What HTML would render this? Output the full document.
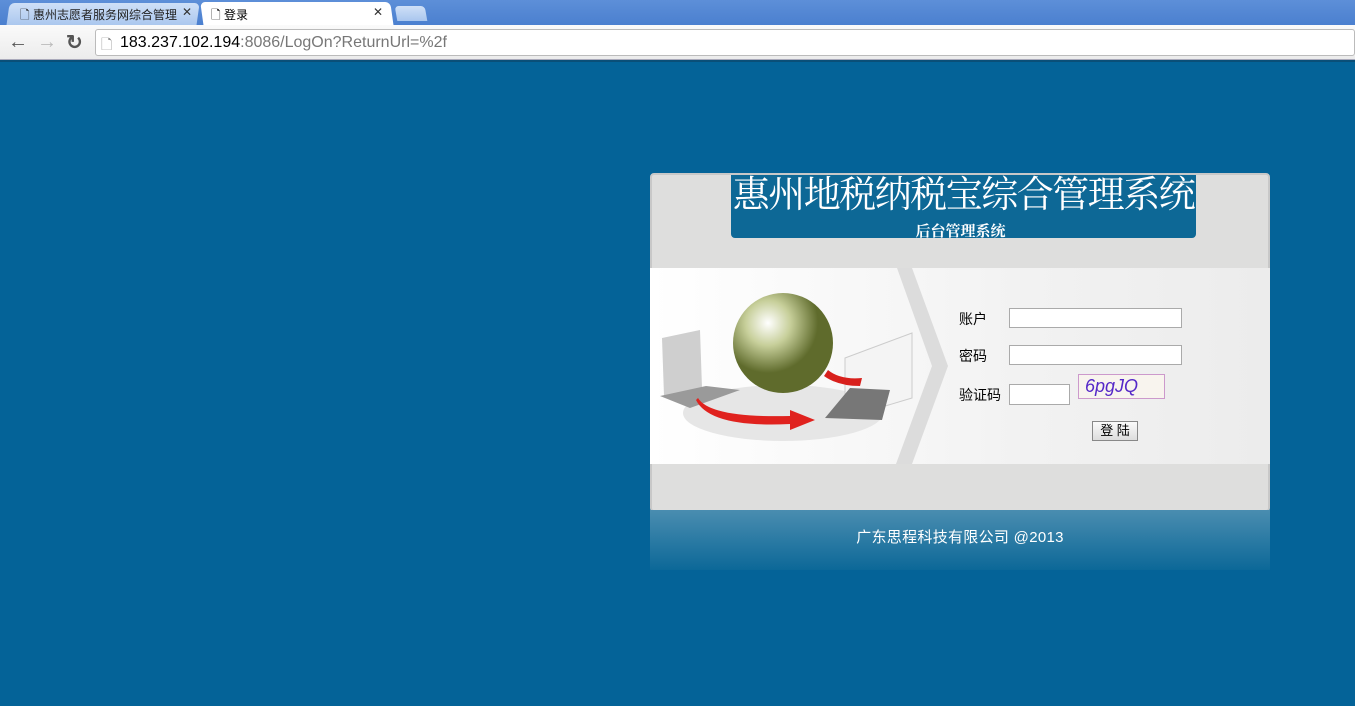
<!DOCTYPE html>
<html><head><meta charset="utf-8"><style>
*{margin:0;padding:0;box-sizing:border-box}
body{width:1355px;height:706px;overflow:hidden;background:#046398;font-family:"Liberation Sans","Noto Sans CJK SC",sans-serif;position:relative}
.abs{position:absolute}
</style></head><body>
<div class="abs" style="left:0;top:0;width:1355px;height:26px;background:linear-gradient(#5d8fd8,#4a7fcf)"></div>
<div class="abs" style="left:8px;top:3px;width:190px;height:23px;background:linear-gradient(#cfe0f7,#a9c6ee);border-radius:5px 5px 0 0;transform:skewX(-8deg)"></div>
<div class="abs" style="left:20px;top:6px;font-size:12px;color:#222;white-space:nowrap">🗋 惠州志愿者服务网综合管理</div>
<div class="abs" style="left:182px;top:5px;font-size:12px;color:#333">✕</div>
<div class="abs" style="left:202px;top:2px;width:190px;height:25px;background:#fff;border-radius:5px 5px 0 0;transform:skewX(8deg)"></div>
<div class="abs" style="left:211px;top:6px;font-size:12px;color:#000">🗋 登录</div>
<div class="abs" style="left:373px;top:5px;font-size:12px;color:#333">✕</div>
<div class="abs" style="left:396px;top:6px;width:30px;height:15px;background:linear-gradient(#cfe0f7,#a9c6ee);border-radius:4px 4px 0 0;transform:skewX(10deg)"></div>
<div class="abs" style="left:0;top:25px;width:1355px;height:35px;background:linear-gradient(#fafafa,#ececec);border-bottom:1px solid #aab"></div>
<div class="abs" style="left:8px;top:31px;font-size:20px;color:#555;font-weight:bold">←</div>
<div class="abs" style="left:37px;top:31px;font-size:20px;color:#bbb;font-weight:bold">→</div>
<div class="abs" style="left:66px;top:30px;font-size:20px;color:#555;font-weight:bold">↻</div>
<div class="abs" style="left:95px;top:29px;width:1260px;height:27px;background:#fff;border:1px solid #bbb;border-radius:3px"></div>
<div class="abs" style="left:101px;top:34px;font-size:14px;color:#888">🗋</div>
<div class="abs" style="left:120px;top:34px;font-size:16px;color:#777;white-space:nowrap"><span style="color:#000">183.237.102.194</span>:8086/LogOn?ReturnUrl=%2f</div>
<div class="abs" style="left:0;top:60px;width:1355px;height:2px;background:#0a4f78"></div>
<div class="abs" style="left:650px;top:173px;width:620px;height:339px;background:#dededd;border:2px solid #c8c8c8;border-radius:4px"></div>
<div class="abs" style="left:731px;top:175px;width:465px;height:63px;background:#0d6896;border-radius:0 0 4px 4px"></div>
<div class="abs" style="left:728px;top:173px;width:471px;text-align:center;font-family:'Liberation Serif','Noto Serif CJK SC',serif;font-size:37px;color:#fff;line-height:46px;letter-spacing:-1.5px;white-space:nowrap">惠州地税纳税宝综合管理系统</div>
<div class="abs" style="left:728px;top:220px;width:465px;text-align:center;font-family:'Liberation Serif','Noto Serif CJK SC',serif;font-size:15px;font-weight:bold;color:#fff">后台管理系统</div>
<div class="abs" style="left:650px;top:268px;width:620px;height:196px;background:linear-gradient(90deg,#fff,#f2f2f2 60%,#ececec)"></div>
<svg class="abs" style="left:650px;top:268px" width="300" height="196">
<defs><radialGradient id="g" cx="0.35" cy="0.3"><stop offset="0" stop-color="#ffffff"/><stop offset="0.45" stop-color="#c7cf9a"/><stop offset="1" stop-color="#5f6b2c"/></radialGradient></defs>
<polygon points="247,0 262,0 298,98 262,196 246,196 282,98" fill="#dcdcdc"/>
<ellipse cx="133" cy="145" rx="100" ry="28" fill="#e6e6e6"/>
<polygon points="12,70 50,62 52,120 14,128" fill="#cfcfcf"/><polygon points="10,128 56,118 90,122 40,140" fill="#9a9a9a"/>
<polygon points="195,90 262,65 262,130 195,150" fill="#f4f4f4" stroke="#ccc"/><polygon points="175,150 200,120 240,122 232,152" fill="#777"/>
<circle cx="133" cy="75" r="50" fill="url(#g)"/>
<path d="M48,130 Q60,150 140,148 L140,142 L165,152 L140,162 L140,156 Q60,160 46,132Z" fill="#e0221e"/>
<path d="M178,102 Q190,112 212,110 L210,118 Q188,118 174,108Z" fill="#d8201c"/>
</svg>
<div class="abs" style="left:959px;top:310px;font-size:14px;line-height:18px">账户</div>
<div class="abs" style="left:959px;top:347px;font-size:14px;line-height:18px">密码</div>
<div class="abs" style="left:959px;top:386px;font-size:14px;line-height:18px">验证码</div>
<div class="abs" style="left:1009px;top:308px;width:173px;height:20px;background:#fff;border:1px solid #aaa"></div>
<div class="abs" style="left:1009px;top:345px;width:173px;height:20px;background:#fff;border:1px solid #aaa"></div>
<div class="abs" style="left:1009px;top:384px;width:61px;height:21px;background:#fff;border:1px solid #aaa"></div>
<div class="abs" style="left:1078px;top:374px;width:87px;height:25px;background:#f8f4ee;border:1px solid #c9c;font-size:18px;font-style:italic;color:#5528c8;padding-left:6px;line-height:22px">6pgJQ</div>
<div class="abs" style="left:1092px;top:421px;width:46px;height:20px;background:linear-gradient(#fafafa,#ddd);border:1px solid #888;font-size:13px;text-align:center;line-height:18px">登 陆</div>
<div class="abs" style="left:650px;top:510px;width:620px;height:60px;background:linear-gradient(#4a8db0,#0c6898)"></div>
<div class="abs" style="left:650px;top:526px;width:620px;text-align:center;font-size:15px;color:#fff;letter-spacing:0.3px">广东思程科技有限公司 @2013</div>
</body></html>
